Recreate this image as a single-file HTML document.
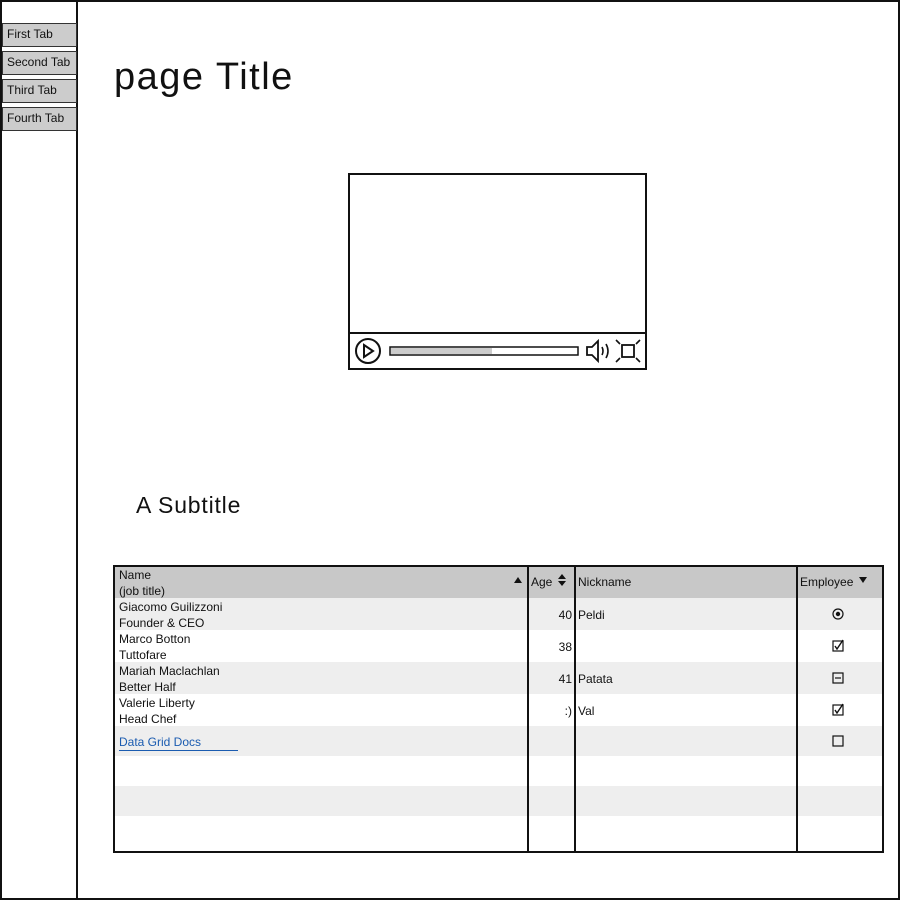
<!DOCTYPE html><html><head><style>
body{margin:0;width:900px;height:900px;position:relative;overflow:hidden;background:#fff;font-family:"Liberation Sans",sans-serif;color:#111}
.a{position:absolute;box-sizing:border-box}
.tab{position:absolute;left:2px;width:75px;height:24px;background:#ccc;border:1.5px solid #333;font-size:12px;line-height:21px;padding-left:4px;box-sizing:border-box}
.t{position:absolute;font-size:12px;line-height:16px}
</style></head><body>
<div class="a" style="left:0;top:0;width:900px;height:900px;border:2px solid #111"></div>
<div class="a" style="left:76px;top:0;width:2px;height:900px;background:#111"></div>
<div class="tab" style="top:23px">First Tab</div>
<div class="tab" style="top:51px">Second Tab</div>
<div class="tab" style="top:79px">Third Tab</div>
<div class="tab" style="top:107px">Fourth Tab</div>
<div class="a" style="left:114px;top:54px;font-size:38px;line-height:46px;letter-spacing:1.5px">page Title</div>
<div class="a" style="left:348px;top:173px;width:299px;height:197px;border:2px solid #111"></div>
<div class="a" style="left:348px;top:332px;width:299px;height:2px;background:#111"></div>
<svg class="a" style="left:348px;top:334px" width="299" height="36">
<circle cx="20" cy="17" r="12" fill="none" stroke="#111" stroke-width="2"/>
<path d="M16 11 L25 17 L16 23 Z" fill="none" stroke="#111" stroke-width="2"/>
<rect x="42" y="13" width="188" height="8" fill="#fff" stroke="#111" stroke-width="1.5"/>
<rect x="43" y="14" width="101" height="6" fill="#ccc"/>
<path d="M239 13 h5 l6 -6 v20 l-6 -6 h-5 z" fill="none" stroke="#111" stroke-width="1.8"/>
<path d="M254 13 q2 4 0 8 M258 10 q4 7 0 14" fill="none" stroke="#111" stroke-width="1.6"/>
<rect x="274" y="11" width="12" height="12" fill="none" stroke="#111" stroke-width="1.8"/>
<path d="M268 6 l4 4 M292 6 l-4 4 M268 28 l4 -4 M292 28 l-4 -4" stroke="#111" stroke-width="1.6"/>
</svg>
<div class="a" style="left:136px;top:491px;font-size:23px;line-height:28px;letter-spacing:0.8px">A Subtitle</div>
<div class="a" style="left:113px;top:565px;width:770px;height:33px;background:#c8c8c8"></div>
<div class="a" style="left:113px;top:598px;width:770px;height:32px;background:#eee"></div>
<div class="a" style="left:113px;top:662px;width:770px;height:32px;background:#eee"></div>
<div class="a" style="left:113px;top:726px;width:770px;height:30px;background:#eee"></div>
<div class="a" style="left:113px;top:786px;width:770px;height:30px;background:#eee"></div>
<div class="a" style="left:113px;top:565px;width:771px;height:288px;border:2px solid #111"></div>
<div class="a" style="left:527px;top:565px;width:2px;height:287px;background:#111"></div>
<div class="a" style="left:574px;top:565px;width:2px;height:287px;background:#111"></div>
<div class="a" style="left:796px;top:565px;width:2px;height:287px;background:#111"></div>
<div class="t" style="left:119px;top:567px">Name<br>(job title)</div>
<svg class="a" style="left:513px;top:576px" width="10" height="8"><path d="M1 7 L5 1 L9 7Z" fill="#111"/></svg>
<div class="t" style="left:531px;top:574px">Age</div>
<svg class="a" style="left:557px;top:573px" width="10" height="14"><path d="M1 6 L5 1 L9 6Z M1 8 L5 13 L9 8Z" fill="#111"/></svg>
<div class="t" style="left:578px;top:574px">Nickname</div>
<div class="t" style="left:800px;top:574px">Employee</div>
<svg class="a" style="left:858px;top:576px" width="10" height="8"><path d="M1 1 L5 7 L9 1Z" fill="#111"/></svg>
<div class="t" style="left:119px;top:599px">Giacomo Guilizzoni<br>Founder &amp; CEO</div>
<div class="t" style="left:119px;top:631px">Marco Botton<br>Tuttofare</div>
<div class="t" style="left:119px;top:663px">Mariah Maclachlan<br>Better Half</div>
<div class="t" style="left:119px;top:695px">Valerie Liberty<br>Head Chef</div>
<div class="t" style="left:119px;top:734px;color:#1a5bb0;border-bottom:1px solid #1a5bb0;width:119px">Data Grid Docs</div>
<div class="t" style="left:530px;top:607px;width:42px;text-align:right">40</div>
<div class="t" style="left:530px;top:639px;width:42px;text-align:right">38</div>
<div class="t" style="left:530px;top:671px;width:42px;text-align:right">41</div>
<div class="t" style="left:530px;top:703px;width:42px;text-align:right">:)</div>
<div class="t" style="left:578px;top:607px">Peldi</div>
<div class="t" style="left:578px;top:671px">Patata</div>
<div class="t" style="left:578px;top:703px">Val</div>
<svg class="a" style="left:828px;top:600px" width="20" height="160">
<circle cx="10" cy="14" r="5" fill="none" stroke="#111" stroke-width="1.2"/><circle cx="10" cy="14" r="2.2" fill="#111"/>
<rect x="5" y="41" width="10" height="10" fill="none" stroke="#111" stroke-width="1.2"/><path d="M7 46 l2 3 l6 -9" fill="none" stroke="#111" stroke-width="1.4"/>
<rect x="5" y="73" width="10" height="10" fill="none" stroke="#111" stroke-width="1.2"/><path d="M7 78 h6" stroke="#111" stroke-width="1.2"/>
<rect x="5" y="105" width="10" height="10" fill="none" stroke="#111" stroke-width="1.2"/><path d="M7 110 l2 3 l6 -9" fill="none" stroke="#111" stroke-width="1.4"/>
<rect x="5" y="136" width="10" height="10" fill="none" stroke="#111" stroke-width="1.2"/>
</svg>
</body></html>
